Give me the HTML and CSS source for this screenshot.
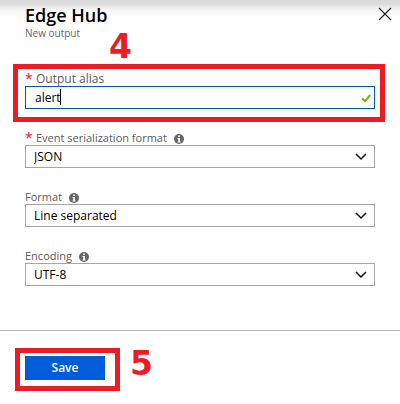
FILE: index.html
```html
<!DOCTYPE html>
<html lang="en">
<head>
<meta charset="utf-8">
<meta name="viewport" content="width=device-width, initial-scale=1">
<title>Edge Hub</title>
<link rel="stylesheet" href="styles.css">
</head>
<body>
<svg class="symbols" aria-hidden="true">
  <symbol id="info" viewBox="0 0 10 10">
    <circle cx="5" cy="5" r="5" fill="#666"/>
    <path d="M4.2 1.5h1.7v1.5H4.2zM3.5 4h2.4v3.5h.7v.9H3.5v-.9h.7V4.9h-.7z" fill="#fff"/>
  </symbol>
  <symbol id="chevron" viewBox="0 0 12 8">
    <path d="M1 1l5 5 5-5" fill="none" stroke="#111" stroke-width="1.5"/>
  </symbol>
</svg>
<form class="blade">
  <header class="header">
    <div class="titles">
      <h1 class="title">Edge Hub</h1>
      <p class="subtitle">New output</p>
    </div>
    <button class="close" type="button" aria-label="Close">
      <svg width="12" height="12" viewBox="0 0 12 12"><path d="M0 0l12 12M12 0L0 12" stroke="#222" stroke-width="1.2"/></svg>
    </button>
  </header>
  <main class="fields">
    <div class="field marked">
      <span class="step step-above">4</span>
      <label class="label label-large" for="alias"><span class="required">*</span>Output alias</label>
      <div class="control">
        <input class="box box-active" id="alias" type="text" value="alert">
        <span class="caret"></span>
        <svg class="check" width="10" height="9" viewBox="0 0 10 9"><path d="M1 4.2l3 3L9.2 1" fill="none" stroke="#7fba00" stroke-width="2"/></svg>
      </div>
    </div>
    <div class="field">
      <label class="label" for="serialization"><span class="required">*</span>Event serialization format<svg class="info"><use href="#info"/></svg></label>
      <div class="control">
        <select class="box" id="serialization"><option>JSON</option></select>
        <svg class="chevron"><use href="#chevron"/></svg>
      </div>
    </div>
    <div class="field">
      <label class="label" for="format">Format<svg class="info"><use href="#info"/></svg></label>
      <div class="control">
        <select class="box" id="format"><option>Line separated</option></select>
        <svg class="chevron"><use href="#chevron"/></svg>
      </div>
    </div>
    <div class="field">
      <label class="label" for="encoding">Encoding<svg class="info"><use href="#info"/></svg></label>
      <div class="control">
        <select class="box" id="encoding"><option>UTF-8</option></select>
        <svg class="chevron"><use href="#chevron"/></svg>
      </div>
    </div>
  </main>
  <footer class="footer">
    <div class="action">
      <button class="save" type="button">Save</button>
      <span class="step step-beside">5</span>
    </div>
  </footer>
</form>
</body>
</html>
```
FILE: styles.css
```css
* { box-sizing: border-box; }
body {
  margin: 0;
  background: #fff;
  color: #000;
  font: 12px/16px "Open Sans", "Noto Sans", sans-serif;
}
.symbols { position: absolute; width: 0; height: 0; }
.header {
  display: flex;
  justify-content: space-between;
  align-items: flex-start;
  padding: 4px 9px 0 25px;
  background: linear-gradient(#d8d8d8, #dcdcdc 4px, #f6f6f6 10px, #fff 17px);
}
.title { margin: 0; font-size: 18px; line-height: 22px; font-weight: 600; }
.subtitle { margin: 0; color: #666; font-size: 10px; line-height: 14px; }
.close { display: flex; margin: 4px 0 0; padding: 0; border: 0; background: none; }
.close svg { overflow: visible; }
.fields {
  display: grid;
  gap: 20px;
  padding: 30px 25px 44px;
}
.field { position: relative; }
.label { display: flex; align-items: center; height: 16px; padding-top: 1px; color: #5c5c5c; font-size: 11px; }
.label-large { font-size: 12px; }
.required { width: 11px; color: #e81123; font-size: 14px; }
.info { width: 10px; height: 10px; margin: 3px 0 0 7px; }
.control { position: relative; }
.box {
  display: block;
  width: 100%;
  height: 23px;
  margin: 0;
  padding: 0 28px 0 8px;
  border: 1px solid #a6a6a6;
  border-radius: 0;
  outline: 0;
  background: #fff;
  color: #000;
  font: inherit;
  appearance: none;
}
.box-active { padding-left: 9px; border-color: #0058ad; }
.chevron { position: absolute; top: 8px; right: 8px; width: 12px; height: 8px; pointer-events: none; }
.check { position: absolute; top: 8px; right: 4px; }
.caret { position: absolute; top: 3px; left: 35px; width: 1px; height: 16px; background: #000; }

/* Tutorial callouts: red frames and step numbers */
.marked::after, .action::after {
  content: "";
  position: absolute;
  border: 5px solid #ed1c24;
  pointer-events: none;
}
.marked::after { inset: -6px -10px -13px -12px; }
.action::after { inset: -8px -15px -11px -10px; }
.step {
  position: absolute;
  color: #ed1c24;
  font: bold 33px/32px "DejaVu Sans", sans-serif;
}
.step-above { left: 84px; top: -39px; }
.step-beside { left: 105px; top: -8px; }

.footer { padding: 25px; border-top: 1px solid #b8b8b8; }
.action { position: relative; width: 80px; }
.save {
  display: block;
  width: 100%;
  height: 24px;
  padding: 0;
  border: 0;
  background: #015cda;
  color: #fff;
  font: 600 12px/24px "Open Sans", "Noto Sans", sans-serif;
}
```
